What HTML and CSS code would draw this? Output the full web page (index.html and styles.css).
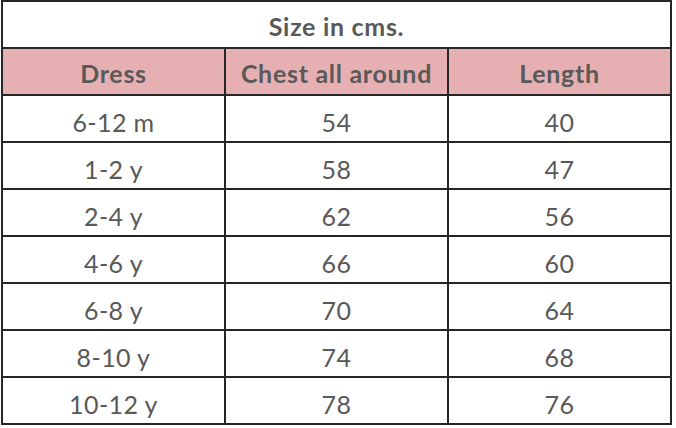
FILE: index.html
```html
<!DOCTYPE html>
<html>
<head>
<meta charset="utf-8">
<link rel="stylesheet" href="styles.css">
</head>
<body>
<table class="sizes">
  <tr class="title"><td colspan="3">Size in cms.</td></tr>
  <tr class="head"><td>Dress</td><td>Chest all around</td><td>Length</td></tr>
  <tr><td>6-12 m</td><td>54</td><td>40</td></tr>
  <tr><td>1-2 y</td><td>58</td><td>47</td></tr>
  <tr><td>2-4 y</td><td>62</td><td>56</td></tr>
  <tr><td>4-6 y</td><td>66</td><td>60</td></tr>
  <tr><td>6-8 y</td><td>70</td><td>64</td></tr>
  <tr><td>8-10 y</td><td>74</td><td>68</td></tr>
  <tr><td>10-12 y</td><td>78</td><td>76</td></tr>
</table>
</body>
</html>
```
FILE: styles.css
```css
html, body {
  margin: 0;
  padding: 0;
  background: #ffffff;
}
.sizes {
  margin: 0 0 0 1px;
  border-collapse: collapse;
  width: 671px;
  table-layout: fixed;
  font-family: Lato, "Liberation Sans", sans-serif;
  font-size: 25px;
  letter-spacing: 0.4px;
  color: #595959;
}
.sizes td {
  border: 2px solid #262626;
  height: 47px;
  padding: 0 0 5px 0;
  box-sizing: border-box;
  text-align: center;
  vertical-align: bottom;
  line-height: 28px;
}
.sizes .title td,
.sizes .head td {
  font-weight: bold;
  letter-spacing: 0.7px;
  padding-bottom: 7px;
}
.sizes .head td {
  background: #e6b0b2;
}
.sizes td:nth-child(1) { width: 224px; }
```
